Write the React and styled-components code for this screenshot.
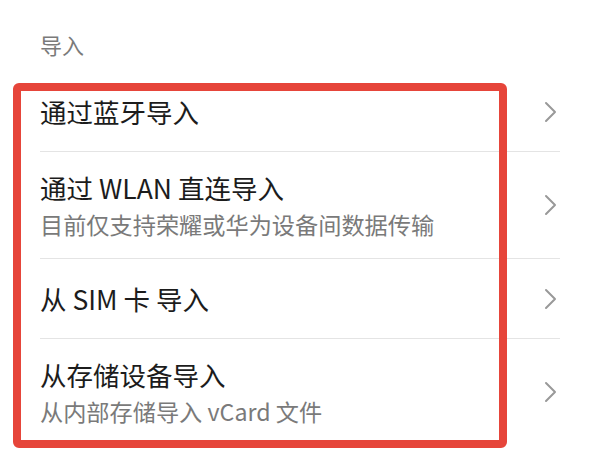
import React from "react";
import styled, { createGlobalStyle } from "styled-components";

const Global = createGlobalStyle`
    html, body {
        margin: 0;
        padding: 0;
        background: #ffffff;
    }
    body {
        font-family: "Noto Sans CJK SC", "Noto Sans", sans-serif;
    }
`

const Page = styled.div`
    position: relative;
    width: 600px;
    height: 450px;
    overflow: hidden;
    padding: 0 40px;
    box-sizing: border-box;
`

const SectionTitle = styled.div`
    padding-top: 28px;
    height: 44px;
    font-size: 22px;
    line-height: 32px;
    color: #7a7a7a;
`

const List = styled.ul`
    list-style: none;
    margin: 0;
    padding: 0;
    width: 520px;
`

const Row = styled.li`
    display: flex;
    align-items: center;
    justify-content: space-between;
    min-height: 80px;
    padding: 17px 3px 17px 0;
    box-sizing: border-box;
    border-bottom: ${({ last }) => (last ? "none" : "1px solid #e4e4e4")};
`

const Texts = styled.div`
    display: flex;
    flex-direction: column;
`

const Title = styled.span`
    font-size: 26.5px;
    line-height: 38px;
    color: #1c1c1c;
`

const Sub = styled.span`
    font-size: 23.2px;
    line-height: 34px;
    color: #7a7a7a;
`

const Highlight = styled.div`
    position: absolute;
    left: 13px;
    top: 83px;
    width: 494px;
    height: 365px;
    border: 8px solid #e6453a;
    border-radius: 6px;
    box-sizing: border-box;
    pointer-events: none;
`

const Chevron = () => (
    <svg width="14" height="22" viewBox="0 0 14 22">
        <path d="M3 2 L12 11 L3 20" fill="none" stroke="#999999" strokeWidth="2" strokeLinecap="round" strokeLinejoin="round" />
    </svg>
)

const items = [
    { title: "通过蓝牙导入" },
    { title: "通过 WLAN 直连导入", sub: "目前仅支持荣耀或华为设备间数据传输" },
    { title: "从 SIM 卡 导入" },
    { title: "从存储设备导入", sub: "从内部存储导入 vCard 文件" },
]

const App = () => {
    return (
        <Page>
            <Global />
            <SectionTitle>导入</SectionTitle>
            <List>
                {items.map((item, i) => (
                    <Row key={item.title} last={i === items.length - 1}>
                        <Texts>
                            <Title>{item.title}</Title>
                            {item.sub && <Sub>{item.sub}</Sub>}
                        </Texts>
                        <Chevron />
                    </Row>
                ))}
            </List>
            <Highlight />
        </Page>
    )
}

export default App;
